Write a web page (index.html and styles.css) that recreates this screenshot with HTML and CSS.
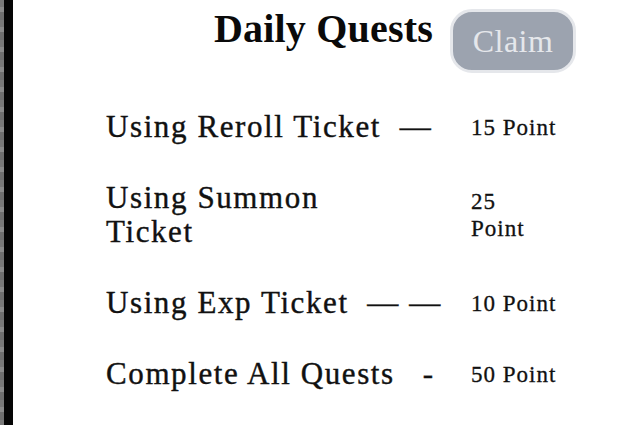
FILE: index.html
```html
<!DOCTYPE html>
<html>
<head>
<meta charset="utf-8">
<link rel="stylesheet" href="styles.css">
</head>
<body>
<div class="frame">
  <div class="edge"></div>
  <div class="bar"></div>
  <main class="panel">
    <header class="head">
      <h1 class="title">Daily Quests</h1>
      <button class="claim">Claim</button>
    </header>
    <ul class="quests">
      <li class="quest"><span class="label">Using Reroll Ticket &nbsp;—</span><span class="pts">15 Point</span></li>
      <li class="quest"><span class="label">Using Summon<br>Ticket</span><span class="pts">25<br>Point</span></li>
      <li class="quest"><span class="label">Using Exp Ticket &nbsp;— —</span><span class="pts">10 Point</span></li>
      <li class="quest"><span class="label">Complete All Quests &nbsp;&nbsp;-</span><span class="pts">50 Point</span></li>
    </ul>
  </main>
</div>
</body>
</html>
```

FILE: styles.css
```css
html, body {
  margin: 0;
  padding: 0;
  background: #ffffff;
}
body {
  font-family: "Liberation Serif", "Times New Roman", serif;
  color: #111111;
}
.frame {
  display: flex;
  height: 425px;
  overflow: hidden;
}
.edge {
  width: 4px;
  background: repeating-linear-gradient(180deg, #7a7a7a 0 7px, #8c8c8c 7px 12px, #6f6f6f 12px 20px);
}
.bar {
  width: 9px;
  background: #050505;
}
.panel {
  flex: 1;
  display: flex;
  flex-direction: column;
}
.head {
  display: flex;
  align-items: flex-start;
  justify-content: flex-end;
  gap: 17px;
  padding: 9px 52px 0 0;
}
.title {
  margin: 0;
  font-size: 40px;
  line-height: 40px;
  font-weight: bold;
  letter-spacing: 0.2px;
  color: #0a0a0a;
}
.claim {
  width: 126px;
  height: 64px;
  border: 3px solid #e5e7eb;
  border-radius: 22px;
  background: #9ca3af;
  color: #e5e7eb;
  font-family: inherit;
  font-size: 32px;
  letter-spacing: 0.5px;
  padding: 0;
}
.quests {
  list-style: none;
  margin: 0;
  padding: 37px 0 0 93px;
  display: flex;
  flex-direction: column;
  gap: 37px;
}
.quest {
  display: grid;
  grid-template-columns: 365px 100px;
  align-items: center;
}
.label {
  font-size: 31px;
  line-height: 34px;
  letter-spacing: 1.6px;
  -webkit-text-stroke: 0.4px #111111;
}
.pts {
  font-size: 23px;
  line-height: 27px;
  letter-spacing: 1px;
  -webkit-text-stroke: 0.3px #111111;
}
```
